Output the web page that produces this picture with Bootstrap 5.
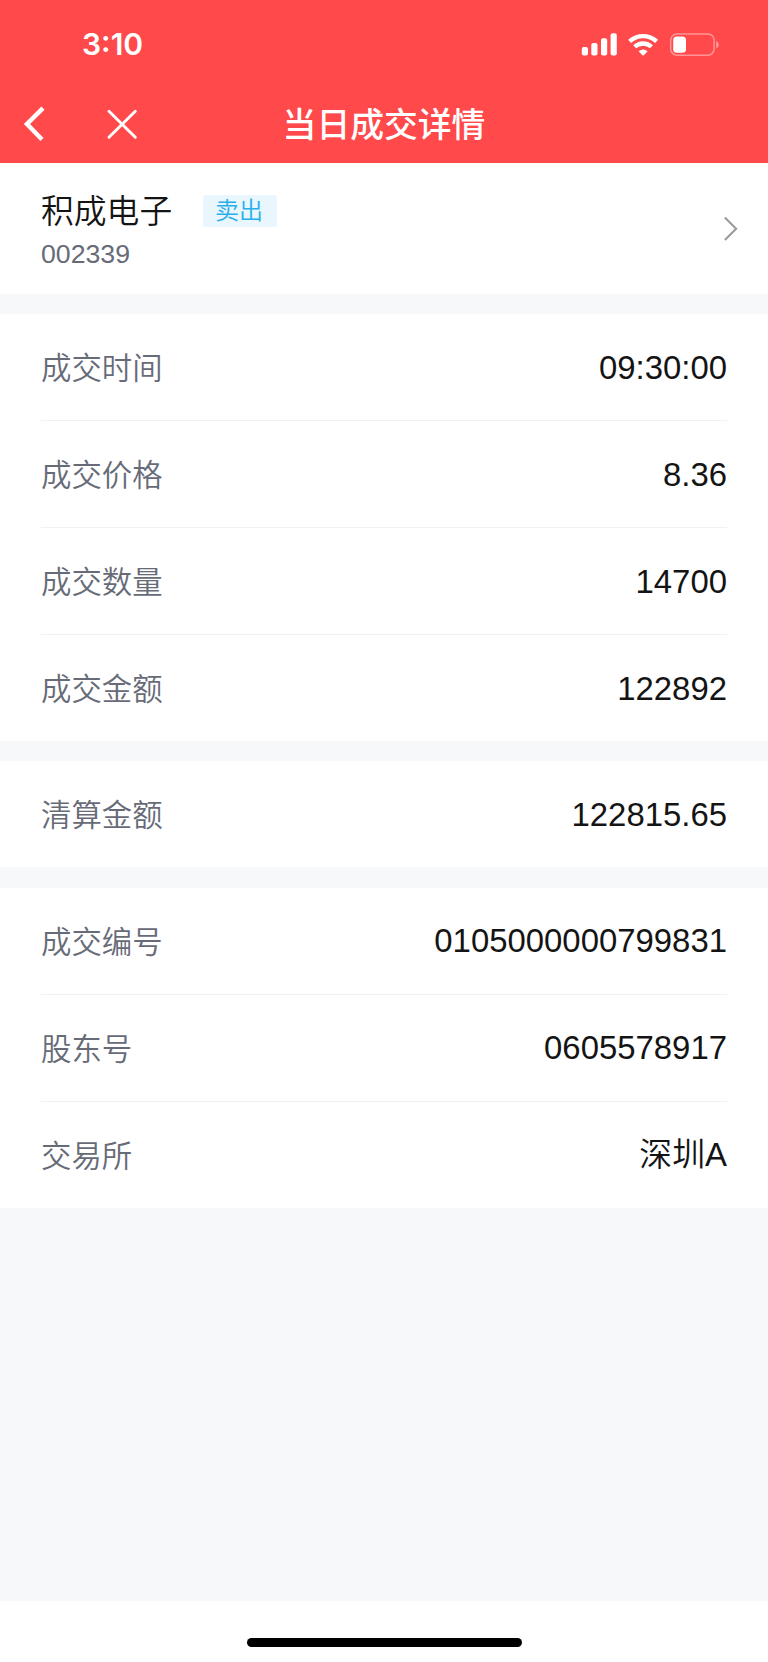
<!DOCTYPE html>
<html lang="zh-CN">
<head>
<meta charset="utf-8">
<meta name="viewport" content="width=device-width, initial-scale=1">
<title>当日成交详情</title>
<link href="https://cdn.jsdelivr.net/npm/bootstrap@5.3.0/dist/css/bootstrap.min.css" rel="stylesheet">
<style>
body{font-family:"Liberation Sans","Noto Sans CJK SC",sans-serif;background:#f6f8fa;color:#141414;min-height:1662px}
.app-head{background:#ff494b;height:163.3px}
.status{height:86px;padding:0 48px 0 82px}
.clock{font:600 30px/1 Inter,sans-serif;padding-top:2px}
.signals{margin-bottom:1px}
.title-row{display:grid;grid-template-columns:1fr auto 1fr;height:76px}
.page-title{font-size:33.8px;font-weight:500;line-height:1;padding-top:4px}
.summary{height:130.4px;padding:28px 30px 0 41px}
.stock-name{font-size:32.8px;line-height:40px;font-weight:350;padding-top:1px}
.side-tag{width:73.5px;height:32px;border-radius:3px;background:#e9f6fd;color:#28afea;font-size:24px;line-height:32px;font-weight:350;padding:0 2px 0 0;margin:-2px 0 0 31px}
.stock-code{font-size:26.7px;line-height:30px;color:#676b78;margin-top:7px}
.panel{margin-top:20.4px;padding:0 41px}
.field{height:107px;border-bottom:1px solid #f0f1f2}
.field:last-child{height:106px;border-bottom:0}
.field dt{font-size:30.4px;font-weight:350;color:#676b78;line-height:1;padding-top:2px}
.field dd{font-size:32.9px;font-weight:350;line-height:1;padding-top:2px}
.home-area{height:61px}
.home-bar{width:275px;height:9.5px;margin-top:36.5px}
</style>
</head>
<body class="d-flex flex-column">
<header class="app-head text-white">
  <div class="status d-flex align-items-center justify-content-between">
    <span class="clock">3:10</span>
    <svg class="signals" width="140" height="26" viewBox="0 0 140 26" fill="#fff">
      <rect x="1.8" y="17" width="6.2" height="8.6" rx="2"/>
      <rect x="11.3" y="13" width="6.2" height="12.6" rx="2"/>
      <rect x="21" y="8.2" width="6.2" height="17.4" rx="2"/>
      <rect x="30.6" y="3.3" width="6.2" height="22.3" rx="2"/>
      <g fill="none" stroke="#fff" stroke-width="4.3">
        <path d="M49.6 11.4a20 20 0 0 1 27 0"/>
        <path d="M54.7 16.8a12.3 12.3 0 0 1 16.8 0"/>
      </g>
      <path d="M58.6 21.3a6.5 6.5 0 0 1 9 0l-3.8 3.9q-.7.6-1.4 0z"/>
      <rect x="90.7" y="3.9" width="43.4" height="21.3" rx="6.2" fill="none" stroke="#fff" stroke-opacity=".42" stroke-width="1.5"/>
      <rect x="93.2" y="6.4" width="12.8" height="16.4" rx="3.6"/>
      <path d="M136.2 11q2.6 1 2.6 3.7t-2.6 3.6z" fill-opacity=".45"/>
    </svg>
  </div>
  <nav class="title-row align-items-center" aria-label="导航">
    <svg width="150" height="40" viewBox="0 0 150 40" fill="none" stroke="#fff">
      <path d="M43 4.1 27 20 42 35.6" stroke-width="4.4"/>
      <path d="M109 7.3l26.3 26M135.3 7.3l-26.3 26" stroke-width="2.9" stroke-linecap="round"/>
    </svg>
    <h1 class="page-title mb-0">当日成交详情</h1>
    <span></span>
  </nav>
</header>
<main class="flex-grow-1">
  <section class="summary bg-white d-flex justify-content-between">
    <div>
      <div class="d-flex align-items-center">
        <span class="stock-name">积成电子</span>
        <span class="badge side-tag">卖出</span>
      </div>
      <div class="stock-code">002339</div>
    </div>
    <svg class="mt-1" width="16" height="64" viewBox="0 0 16 64" fill="none" stroke="#9b9b9b" stroke-width="2.1">
      <path d="M2.9 22.6 14.1 33.8 2.9 45"/>
    </svg>
  </section>
  <dl class="panel bg-white mb-0">
    <div class="field d-flex align-items-center justify-content-between"><dt>成交时间</dt><dd class="m-0">09:30:00</dd></div>
    <div class="field d-flex align-items-center justify-content-between"><dt>成交价格</dt><dd class="m-0">8.36</dd></div>
    <div class="field d-flex align-items-center justify-content-between"><dt>成交数量</dt><dd class="m-0">14700</dd></div>
    <div class="field d-flex align-items-center justify-content-between"><dt>成交金额</dt><dd class="m-0">122892</dd></div>
  </dl>
  <dl class="panel bg-white mb-0">
    <div class="field d-flex align-items-center justify-content-between"><dt>清算金额</dt><dd class="m-0">122815.65</dd></div>
  </dl>
  <dl class="panel bg-white mb-0">
    <div class="field d-flex align-items-center justify-content-between"><dt>成交编号</dt><dd class="m-0">0105000000799831</dd></div>
    <div class="field d-flex align-items-center justify-content-between"><dt>股东号</dt><dd class="m-0">0605578917</dd></div>
    <div class="field d-flex align-items-center justify-content-between"><dt>交易所</dt><dd class="m-0">深圳A</dd></div>
  </dl>
</main>
<footer class="home-area bg-white d-flex justify-content-center">
  <div class="home-bar bg-black rounded-pill"></div>
</footer>
<script src="https://cdn.jsdelivr.net/npm/bootstrap@5.3.0/dist/js/bootstrap.bundle.min.js"></script>
</body>
</html>
